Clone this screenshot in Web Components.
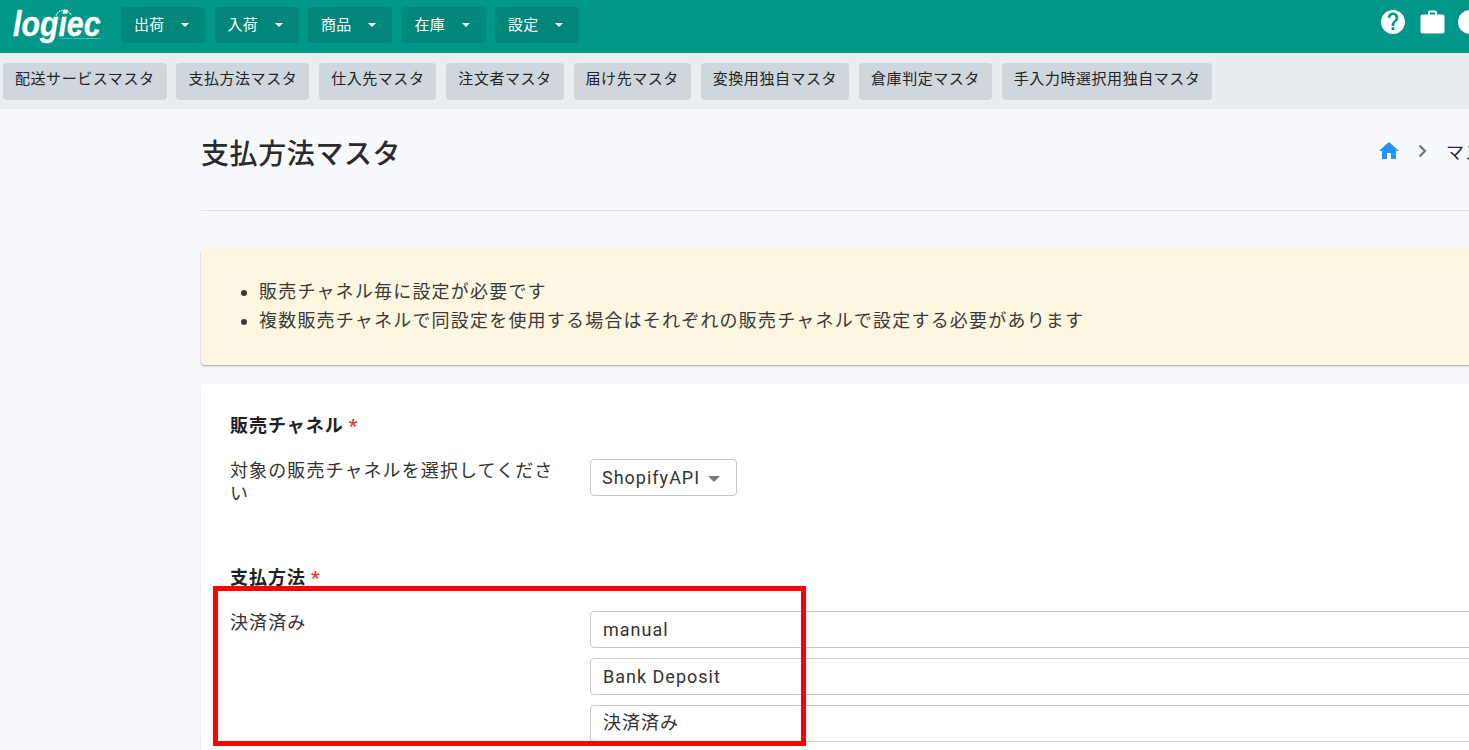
<!DOCTYPE html>
<html lang="ja">
<head>
<meta charset="utf-8">
<title>支払方法マスタ</title>
<style>
  html, body {
    margin: 0;
    height: 750px;
    overflow: hidden;
    background: #f8f9fd;
    font-family: Roboto, "Noto Sans CJK JP", sans-serif;
    color: #2b2b2b;
  }
  app-page { width: 1560px; }
</style>
</head>
<body>
<app-page>
  <top-bar slot="top">
    <menu-button>出荷</menu-button>
    <menu-button>入荷</menu-button>
    <menu-button>商品</menu-button>
    <menu-button>在庫</menu-button>
    <menu-button>設定</menu-button>
  </top-bar>
  <sub-bar slot="top">
    <sub-tab>配送サービスマスタ</sub-tab>
    <sub-tab>支払方法マスタ</sub-tab>
    <sub-tab>仕入先マスタ</sub-tab>
    <sub-tab>注文者マスタ</sub-tab>
    <sub-tab>届け先マスタ</sub-tab>
    <sub-tab>変換用独自マスタ</sub-tab>
    <sub-tab>倉庫判定マスタ</sub-tab>
    <sub-tab>手入力時選択用独自マスタ</sub-tab>
  </sub-bar>
  <page-header>支払方法マスタ</page-header>
  <note-box>
    <li>販売チャネル毎に設定が必要です</li>
    <li>複数販売チャネルで同設定を使用する場合はそれぞれの販売チャネルで設定する必要があります</li>
  </note-box>
  <form-card>
    <form-section heading="販売チャネル">
      <form-row label="対象の販売チャネルを選択してください">
        <select-box>ShopifyAPI</select-box>
      </form-row>
    </form-section>
    <form-section heading="支払方法" class="second">
      <form-row label="決済済み">
        <text-field>manual</text-field>
        <text-field>Bank Deposit</text-field>
        <text-field class="jp">決済済み</text-field>
      </form-row>
    </form-section>
  </form-card>
  <red-mark></red-mark>
</app-page>

<script>
class AppPage extends HTMLElement {
  constructor() {
    super();
    this.attachShadow({ mode: "open" });
    this.shadowRoot.innerHTML = `
      <style>
        :host { display: block; position: relative; height: 750px; }
        main { padding: 0 0 0 201px; }
      </style>
      <slot name="top"></slot>
      <main><slot></slot></main>
    `;
  }
}

class TopBar extends HTMLElement {
  constructor() {
    super();
    this.attachShadow({ mode: "open" });
    this.shadowRoot.innerHTML = `
      <style>
        :host {
          display: flex;
          align-items: center;
          height: 53px;
          background: #009688;
          padding: 0 0 3px 13px;
          box-sizing: border-box;
        }
        .logo {
          width: 88px;
          height: 34px;
          margin-right: 20px;
          color: #fff;
          position: relative;
          flex: none;
        }
        .logo svg { position: absolute; left: 42px; top: 0; }
        .name {
          display: block;
          font: italic 700 30px/24px "Liberation Sans", sans-serif;
          margin-top: 4px;
          transform-origin: left center;
          transform: scale(1.01, 1.16);
          -webkit-text-stroke: .3px #fff;
        }
        .tag {
          position: absolute;
          right: 1px;
          top: 29px;
          font: 2.500px/3px "Liberation Sans", sans-serif;
          white-space: nowrap;
          opacity: .8;
        }
        nav { display: flex; gap: 9.5px; }
        .icons {
          margin-left: auto;
          display: flex;
          align-items: center;
          gap: 15px;
          padding-right: 78px;
          margin-bottom: 6px;
        }
        .icons svg { display: block; }
        .icons svg:last-child { margin-left: -2px; }
      </style>
      <div class="logo">
        <svg width="18" height="8" viewBox="0 0 18 8" fill="none" stroke="#fff" stroke-width="1.3" stroke-dasharray="1.3 1.1"><path d="M1 7.500C4 .8 13 .5 16.500 7.500"/></svg>
        <span class="name">logiec</span>
        <span class="tag">logistics &amp; ec solution management</span>
      </div>
      <nav><slot></slot></nav>
      <div class="icons">
        <svg width="24" height="24" viewBox="0 0 24 24" fill="#fff"><path d="M12 0a12 12 0 1 0 0 24 12 12 0 0 0 0-24zm1.300 20h-2.700v-2.700h2.700V20zm2.800-9.100-1.200 1.200c-1 1-1.600 1.800-1.600 3.800h-2.700v-.7c0-1.500.6-2.800 1.600-3.800l1.700-1.700c.5-.5.800-1.100.8-1.900 0-1.500-1.200-2.700-2.700-2.700S9.300 6.300 9.300 7.800H6.700c0-3 2.400-5.300 5.300-5.300s5.300 2.400 5.300 5.300c0 1.200-.5 2.300-1.200 3.100z"/></svg>
        <svg width="25" height="24" viewBox="0 0 25 24" fill="#fff"><path d="M8 4.500V2.600C8 1.400 9 .5 10.100 .5h4.800C16 .5 17 1.400 17 2.600v1.900h5.500c1.100 0 2 .9 2 2v15c0 1.100-.9 2-2 2h-20c-1.100 0-2-.9-2-2v-15c0-1.100.9-2 2-2H8zm2-.1h5V2.500h-5v1.900z"/></svg>
        <svg width="24" height="24" viewBox="0 0 24 24" fill="#fff"><circle cx="12" cy="12" r="12"/></svg>
      </div>
    `;
  }
}

class MenuButton extends HTMLElement {
  constructor() {
    super();
    this.attachShadow({ mode: "open" });
    this.shadowRoot.innerHTML = `
      <style>
        :host {
          display: flex;
          align-items: center;
          justify-content: space-between;
          box-sizing: border-box;
          width: 84px;
          height: 36px;
          padding: 0 13px 4px;
          background: #00877a;
          border-radius: 4px;
          color: #fff;
          font-size: 15px;
          letter-spacing: 0.2px;
        }
        i {
          width: 0;
          height: 0;
          border: 4.500px solid transparent;
          border-top: 4.500px solid #fff;
          border-bottom: 0;
          margin: 4px 3px 0 0;
        }
      </style>
      <slot></slot><i></i>
    `;
  }
}

class SubBar extends HTMLElement {
  constructor() {
    super();
    this.attachShadow({ mode: "open" });
    this.shadowRoot.innerHTML = `
      <style>
        :host {
          display: flex;
          align-items: center;
          gap: 9.9px;
          height: 56px;
          box-sizing: border-box;
          padding: 1px 0 0 3px;
          background: #ebeef0;
        }
      </style>
      <slot></slot>
    `;
  }
}

class SubTab extends HTMLElement {
  constructor() {
    super();
    this.attachShadow({ mode: "open" });
    this.shadowRoot.innerHTML = `
      <style>
        :host {
          display: flex;
          align-items: center;
          height: 37px;
          padding: 0 12px 8px;
          box-sizing: border-box;
          background: #cfd6dc;
          border-radius: 4px;
          font-size: 15px;
          letter-spacing: 0.55px;
          white-space: nowrap;
          color: #212529;
        }
      </style>
      <slot></slot>
    `;
  }
}

class PageHeader extends HTMLElement {
  constructor() {
    super();
    this.attachShadow({ mode: "open" });
    this.shadowRoot.innerHTML = `
      <style>
        :host {
          display: block;
          height: 101px;
          border-bottom: 1px solid #dcdde3;
          width: 1330px;
        }
        .row {
          display: flex;
          justify-content: space-between;
          align-items: center;
          height: 88px;
        }
        h1 {
          margin: 4px 0 0 0;
          font-size: 28px;
          line-height: 40px;
          font-weight: 500;
          letter-spacing: 0.6px;
        }
        .crumbs {
          display: flex;
          align-items: center;
          gap: 15px;
          font-size: 18px;
          letter-spacing: 1px;
          margin-top: -5px;
          width: 151px;
          flex: none;
          overflow: hidden;
          white-space: nowrap;
        }
        svg { flex: none; display: block; }
        .home { margin-left: -3px; }
        span { margin-left: 3px; }
      </style>
      <div class="row">
        <h1><slot></slot></h1>
        <div class="crumbs">
          <svg class="home" width="24" height="24" viewBox="0 0 24 24" fill="#2196f3"><path d="M10 20v-6h4v6h5v-8h3L12 3 2 12h3v8z"/></svg>
          <svg width="12" height="14" viewBox="0 0 12 14" fill="none" stroke="#6c757d" stroke-width="2.200"><path d="M3.500 1.500l5.500 5.500-5.500 5.500"/></svg>
          <span>マスタ管理</span>
        </div>
      </div>
    `;
  }
}

class NoteBox extends HTMLElement {
  constructor() {
    super();
    this.attachShadow({ mode: "open" });
    this.shadowRoot.innerHTML = `
      <style>
        :host {
          display: block;
          box-sizing: border-box;
          width: 1330px;
          height: 116px;
          margin-top: 38px;
          padding: 28px 0 0 0;
          background: #fdf6e0;
          border-radius: 4px;
          box-shadow: 0 1px 2px rgba(0,0,0,.35);
          font-size: 18px;
          line-height: 29px;
          letter-spacing: 1.2px;
          color: #3a3a3a;
        }
        ul { margin: 0; padding: 0 0 0 58px; }
      </style>
      <ul><slot></slot></ul>
    `;
  }
}

class FormCard extends HTMLElement {
  constructor() {
    super();
    this.attachShadow({ mode: "open" });
    this.shadowRoot.innerHTML = `
      <style>
        :host {
          display: block;
          box-sizing: border-box;
          width: 1330px;
          height: 420px;
          margin-top: 19px;
          padding: 27px 0 0 29px;
          background: #fff;
          border-radius: 4px;
          box-shadow: 0 1px 2px rgba(0,0,0,.12);
        }
      </style>
      <slot></slot>
    `;
  }
}

class FormSection extends HTMLElement {
  constructor() {
    super();
    this.attachShadow({ mode: "open" });
    this.shadowRoot.innerHTML = `
      <style>
        :host { display: block; }
        :host(.second) { margin-top: 58px; }
        h2 {
          margin: 0 0 18px;
          font-size: 18px;
          line-height: 30px;
          font-weight: 700;
          letter-spacing: 1px;
          color: #212121;
        }
        b { color: #ee3333; font-weight: 700; font-size: 19px; letter-spacing: 0; margin-left: 5px; }
      </style>
      <h2><span id="t"></span><b>*</b></h2>
      <slot></slot>
    `;
  }
  connectedCallback() {
    this.shadowRoot.getElementById("t").textContent = this.getAttribute("heading");
  }
}

class FormRow extends HTMLElement {
  constructor() {
    super();
    this.attachShadow({ mode: "open" });
    this.shadowRoot.innerHTML = `
      <style>
        :host { display: flex; align-items: flex-start; }
        label {
          flex: none;
          width: 330px;
          margin-right: 30px;
          font-size: 18px;
          line-height: 23px;
          letter-spacing: 1.1px;
          color: #333;
        }
        .controls { flex: 1; display: flex; flex-direction: column; gap: 10px; align-items: flex-start; }
      </style>
      <label id="l"></label>
      <div class="controls"><slot></slot></div>
    `;
  }
  connectedCallback() {
    this.shadowRoot.getElementById("l").textContent = this.getAttribute("label");
  }
}

class SelectBox extends HTMLElement {
  constructor() {
    super();
    this.attachShadow({ mode: "open" });
    this.shadowRoot.innerHTML = `
      <style>
        :host {
          display: flex;
          align-items: center;
          box-sizing: border-box;
          width: 147px;
          height: 37px;
          padding: 0 0 0 11px;
          border: 1px solid #c8c8c8;
          border-radius: 4px;
          background: #fff;
          font-size: 18px;
          letter-spacing: 1px;
          color: #333;
        }
        i {
          width: 0;
          height: 0;
          margin: 2px 0 0 8px;
          border: 6px solid transparent;
          border-top: 6.500px solid #777;
          border-bottom: 0;
        }
      </style>
      <slot></slot><i></i>
    `;
  }
}

class TextField extends HTMLElement {
  constructor() {
    super();
    this.attachShadow({ mode: "open" });
    this.shadowRoot.innerHTML = `
      <style>
        :host {
          display: flex;
          align-items: center;
          box-sizing: border-box;
          width: 910px;
          height: 37px;
          padding: 0 0 0 12px;
          border: 1px solid #c8c8c8;
          border-radius: 4px;
          background: #fff;
          font-size: 18px;
          letter-spacing: 1px;
          color: #333;
        }
        :host(.jp) { padding-bottom: 5px; }
      </style>
      <slot></slot>
    `;
  }
}

class RedMark extends HTMLElement {
  constructor() {
    super();
    this.attachShadow({ mode: "open" });
    this.shadowRoot.innerHTML = `
      <style>
        :host {
          position: absolute;
          left: 213px;
          top: 586px;
          width: 593px;
          height: 160px;
          box-sizing: border-box;
          border: 5px solid #ff0000;
          pointer-events: none;
        }
      </style>
    `;
  }
}

customElements.define("app-page", AppPage);
customElements.define("top-bar", TopBar);
customElements.define("menu-button", MenuButton);
customElements.define("sub-bar", SubBar);
customElements.define("sub-tab", SubTab);
customElements.define("page-header", PageHeader);
customElements.define("note-box", NoteBox);
customElements.define("form-card", FormCard);
customElements.define("form-section", FormSection);
customElements.define("form-row", FormRow);
customElements.define("select-box", SelectBox);
customElements.define("text-field", TextField);
customElements.define("red-mark", RedMark);
</script>
</body>
</html>
